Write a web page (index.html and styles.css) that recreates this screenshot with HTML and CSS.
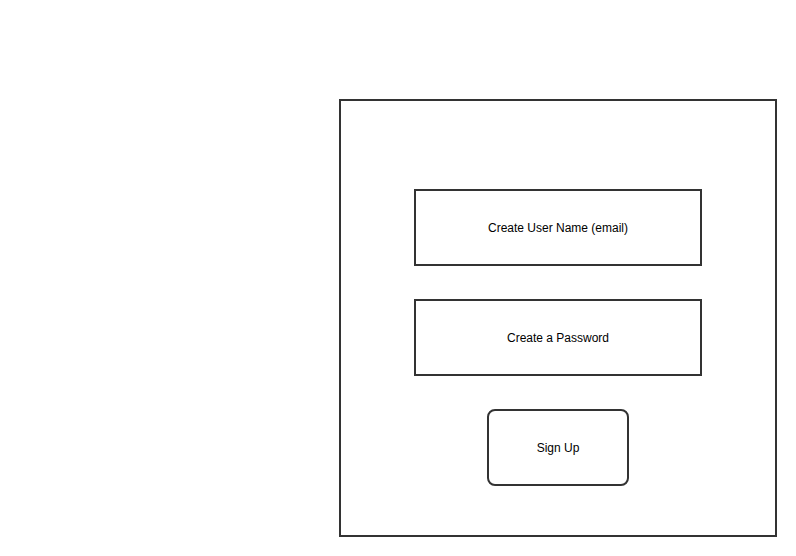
FILE: index.html
```html
<!DOCTYPE html>
<html lang="en">
<head>
    <meta charset="UTF-8">
    <meta name="viewport" content="width=device-width, initial-scale=1.0">
    <title>Sign Up</title>
    <link rel="stylesheet" href="styles.css">
</head>
<body>
    <div class="page">
        <div class="signup-frame">
            <div class="field-box">Create User Name (email)</div>
            <div class="field-box">Create a Password</div>
            <div class="signup-button">Sign Up</div>
        </div>
    </div>
</body>
</html>
```

FILE: styles.css
```css
body {
    margin: 0;
    padding: 0;
    font-family: "Liberation Sans", Arial, sans-serif;
    font-size: 12px;
    color: #000;
    background: #fff;
}

.page {
    padding: 99px 0 0 339px;
}

.signup-frame {
    box-sizing: border-box;
    width: 438px;
    height: 438px;
    border: 2px solid #333;
    padding-top: 88px;
    display: flex;
    flex-direction: column;
    align-items: center;
    gap: 33px;
}

.field-box,
.signup-button {
    box-sizing: border-box;
    height: 77px;
    border: 2px solid #333;
    display: flex;
    justify-content: center;
    align-items: center;
}

.field-box {
    width: 288px;
}

.signup-button {
    width: 142px;
    border-radius: 8px;
}
```
